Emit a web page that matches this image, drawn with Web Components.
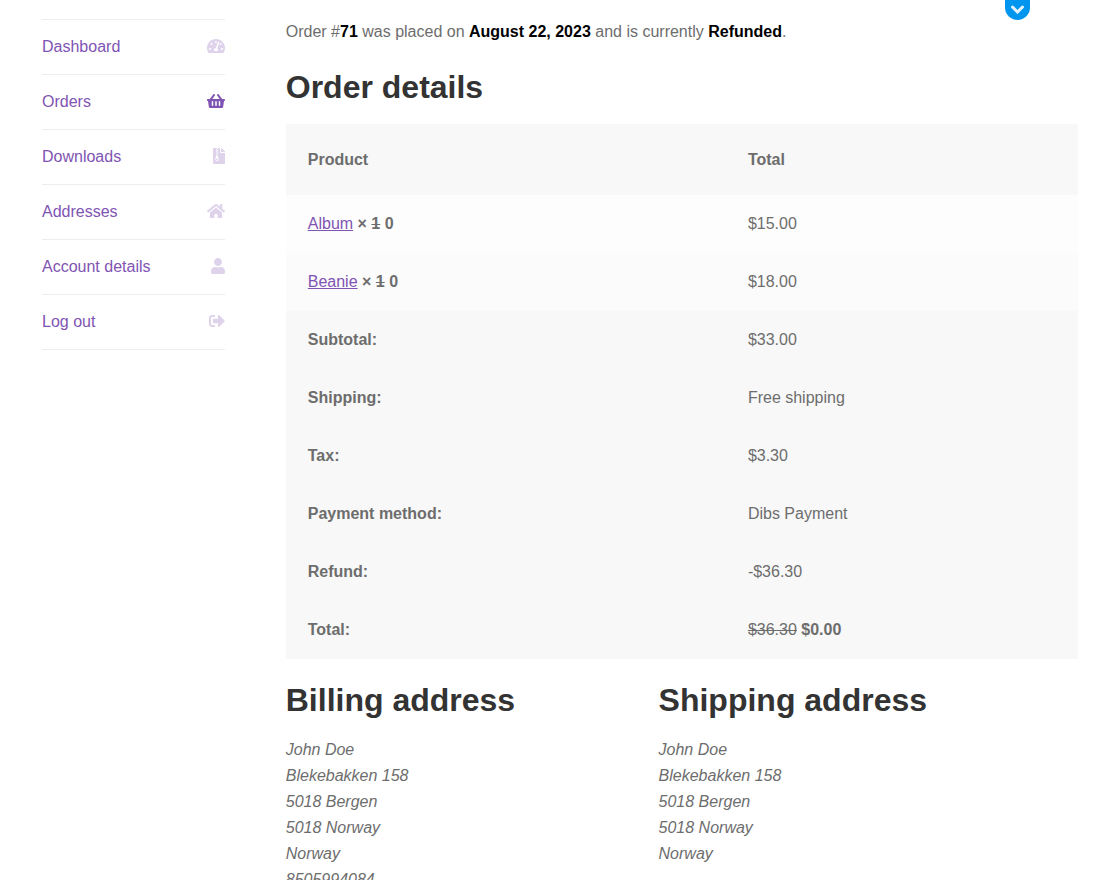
<!DOCTYPE html>
<html lang="en">
<head>
<meta charset="utf-8">
<title>Order #71</title>
<style>
  body {
    margin: 0;
    background: #fff;
    color: #6d6d6d;
    font: 16px/26px "Liberation Sans", Arial, sans-serif;
    --accent: #7f54b3;
    --heading: #333;
  }
</style>
</head>
<body>
<account-page>
  <account-nav slot="nav">
    <nav-item icon="dashboard" href="#dashboard">Dashboard</nav-item>
    <nav-item icon="basket" href="#orders" active>Orders</nav-item>
    <nav-item icon="archive" href="#downloads">Downloads</nav-item>
    <nav-item icon="home" href="#addresses">Addresses</nav-item>
    <nav-item icon="user" href="#account">Account details</nav-item>
    <nav-item icon="signout" href="#logout">Log out</nav-item>
  </account-nav>
  <order-status number="71" date="August 22, 2023" state="Refunded"></order-status>
  <section-heading>Order details</section-heading>
  <order-table></order-table>
  <address-columns>
    <address-card>
      <section-heading slot="title">Billing address</section-heading>
      John Doe<br>Blekebakken 158<br>5018 Bergen<br>5018 Norway<br>Norway<br>8505994084
    </address-card>
    <address-card>
      <section-heading slot="title">Shipping address</section-heading>
      John Doe<br>Blekebakken 158<br>5018 Bergen<br>5018 Norway<br>Norway
    </address-card>
  </address-columns>
</account-page>
<pull-tab></pull-tab>

<script>
const ICONS = {
  dashboard: [576, "M288 32C128.94 32 0 160.94 0 320c0 52.8 14.25 102.26 39.06 144.8 5.61 9.62 16.3 15.2 27.44 15.2h443c11.14 0 21.83-5.58 27.44-15.2C561.75 422.26 576 372.8 576 320c0-159.06-128.94-288-288-288zm0 64c14.71 0 26.58 10.13 30.32 23.65-1.11 2.26-2.64 4.23-3.45 6.67l-9.22 27.67c-5.13 3.49-10.97 6.01-17.64 6.01-17.67 0-32-14.33-32-32S270.33 96 288 96zM96 384c-17.67 0-32-14.33-32-32s14.33-32 32-32 32 14.33 32 32-14.33 32-32 32zm48-160c-17.67 0-32-14.33-32-32s14.33-32 32-32 32 14.33 32 32-14.33 32-32 32zm246.77-72.41l-61.33 184C343.13 347.33 352 364.54 352 384c0 11.72-3.38 22.55-8.88 32H232.88c-5.5-9.45-8.88-20.28-8.88-32 0-33.94 26.5-61.43 59.9-63.59l61.34-184.01c4.17-12.56 17.73-19.45 30.36-15.17 12.57 4.19 19.35 17.79 15.17 30.36zm14.66 57.2l15.52-46.55c3.47-1.29 7.13-2.23 11.05-2.23 17.67 0 32 14.33 32 32s-14.33 32-32 32c-11.38-.01-20.89-6.28-26.57-15.22zM480 384c-17.67 0-32-14.33-32-32s14.33-32 32-32 32 14.33 32 32-14.33 32-32 32z"],
  basket: [576, "M576 216v16c0 13.255-10.745 24-24 24h-8l-26.113 182.788C514.509 462.435 494.257 480 470.37 480H105.63c-23.887 0-44.139-17.565-47.518-41.212L32 256h-8c-13.255 0-24-10.745-24-24v-16c0-13.255 10.745-24 24-24h67.341l106.78-146.821c10.395-14.292 30.407-17.453 44.701-7.058 14.293 10.395 17.453 30.408 7.058 44.701L170.477 192h235.046L326.12 82.821c-10.395-14.292-7.234-34.306 7.059-44.701 14.291-10.395 34.306-7.235 44.701 7.058L484.659 192H552c13.255 0 24 10.745 24 24zM312 392V280c0-13.255-10.745-24-24-24s-24 10.745-24 24v112c0 13.255 10.745 24 24 24s24-10.745 24-24zm112 0V280c0-13.255-10.745-24-24-24s-24 10.745-24 24v112c0 13.255 10.745 24 24 24s24-10.745 24-24zm-224 0V280c0-13.255-10.745-24-24-24s-24 10.745-24 24v112c0 13.255 10.745 24 24 24s24-10.745 24-24z"],
  archive: [384, "M377 105L279.1 7c-4.5-4.5-10.6-7-17-7H256v128h128v-6.1c0-6.3-2.5-12.4-7-16.9zM128.4 336c-17.9 0-32.4 12.1-32.4 27 0 15 14.6 27 32.5 27s32.4-12.1 32.4-27-14.6-27-32.5-27zM224 136V0h-63.6v32h-32V0H24C10.7 0 0 10.7 0 24v464c0 13.3 10.7 24 24 24h336c13.3 0 24-10.7 24-24V160H248c-13.2 0-24-10.8-24-24zM95.9 32h32v32h-32zm32.3 384c-33.2 0-58-30.4-51.4-62.9L96.4 256v-32h32v-32h-32v-32h32v-32h-32V96h32V64h32v32h-32v32h32v32h-32v32h32v32h-32v32h22.1c5.7 0 10.7 4.1 11.8 9.7l17.3 87.7c6.4 32.4-18.4 62.6-51.4 62.6z"],
  home: [576, "M280.37 148.26L96 300.11V464a16 16 0 0 0 16 16l112.06-.29a16 16 0 0 0 15.92-16V368a16 16 0 0 1 16-16h64a16 16 0 0 1 16 16v95.64a16 16 0 0 0 16 16.05L464 480a16 16 0 0 0 16-16V300L295.67 148.26a12.19 12.19 0 0 0-15.3 0zM571.6 251.47L488 182.56V44.05a12 12 0 0 0-12-12h-56a12 12 0 0 0-12 12v72.61L318.47 43a48 48 0 0 0-61 0L4.34 251.47a12 12 0 0 0-1.6 16.9l25.5 31A12 12 0 0 0 45.15 301l235.22-193.74a12.19 12.19 0 0 1 15.3 0L530.9 301a12 12 0 0 0 16.9-1.6l25.5-31a12 12 0 0 0-1.7-16.93z"],
  user: [448, "M224 256c70.7 0 128-57.3 128-128S294.7 0 224 0 96 57.3 96 128s57.3 128 128 128zm89.6 32h-16.7c-22.2 10.2-46.9 16-72.9 16s-50.6-5.8-72.9-16h-16.7C60.2 288 0 348.2 0 422.4V464c0 26.5 21.5 48 48 48h352c26.5 0 48-21.5 48-48v-41.6c0-74.2-60.2-134.4-134.4-134.4z"],
  signout: [512, "M497 273L329 441c-15 15-41 4.5-41-17v-96H152c-13.3 0-24-10.7-24-24v-96c0-13.3 10.7-24 24-24h136V88c0-21.4 25.9-32 41-17l168 168c9.3 9.4 9.3 24.6 0 34zM192 436v-40c0-6.6-5.4-12-12-12H96c-17.7 0-32-14.3-32-32V160c0-17.7 14.3-32 32-32h84c6.6 0 12-5.4 12-12V76c0-6.6-5.4-12-12-12H96c-53 0-96 43-96 96v192c0 53 43 96 96 96h84c6.6 0 12-5.4 12-12z"]
};

// Registers an element whose shadow root is filled from render(host).
function define(name, render) {
  customElements.define(name, class extends HTMLElement {
    connectedCallback() {
      if (!this.shadowRoot) this.attachShadow({ mode: "open" }).innerHTML = render(this);
    }
  });
}

define("account-page", () => `
  <style>
    :host { display: grid; grid-template-columns: minmax(0, 3fr) minmax(0, 1fr) minmax(0, 13fr);
            padding: 19px 42px 42px; align-items: start; }
    main { grid-column: 3; }
  </style>
  <slot name="nav"></slot>
  <main><slot></slot></main>`);

define("account-nav", () => `
  <style>
    :host { display: block; }
    nav { border-top: 1px solid #eee; }
  </style>
  <nav aria-label="Account"><slot></slot></nav>`);

define("nav-item", el => {
  const [w, d] = ICONS[el.getAttribute("icon")];
  return `
  <style>
    :host { display: block; border-bottom: 1px solid #eee; }
    a { display: flex; justify-content: space-between; align-items: center;
        padding: 14px 0; color: var(--accent); text-decoration: none; }
    svg { margin-bottom: 2px; fill: currentColor; opacity: .25; }
    :host([active]) svg { opacity: 1; }
  </style>
  <a href="${el.getAttribute("href")}"><slot></slot><svg viewBox="0 0 ${w} 512" width="${w / 32}" height="16" aria-hidden="true"><path d="${d}"/></svg></a>`;
});

define("order-status", el => `
  <style>
    :host { display: block; margin-bottom: 22px; }
    p { margin: 0; }
    mark { background: none; color: #000; font-weight: bold; }
  </style>
  <p>Order #<mark>${el.getAttribute("number")}</mark> was placed on <mark>${el.getAttribute("date")}</mark> and is currently <mark>${el.getAttribute("state")}</mark>.</p>`);

define("section-heading", () => `
  <style>
    :host { display: block; margin-bottom: 17px; }
    h2 { margin: 0; font-size: 32px; line-height: 40px; color: var(--heading); }
  </style>
  <h2><slot></slot></h2>`);

define("order-table", () => {
  const items = [["Album", "$15.00"], ["Beanie", "$18.00"]];
  const totals = [
    ["Subtotal:", "$33.00"], ["Shipping:", "Free shipping"], ["Tax:", "$3.30"],
    ["Payment method:", "Dibs Payment"], ["Refund:", "-$36.30"],
    ["Total:", "<del>$36.30</del> <strong>$0.00</strong>"]
  ];
  return `
  <style>
    :host { display: block; margin-bottom: 21px; }
    table { width: 100%; border-collapse: collapse; table-layout: fixed; }
    th, td { padding: 16px 22px; text-align: left; background: #f8f8f8; }
    thead th { padding: 23px 22px 22px; }
    thead th:first-child { width: 50%; }
    tbody td { background: #fdfdfd; }
    tbody tr:nth-child(2n) td { background: #fbfbfb; }
    a { color: var(--accent); }
  </style>
  <table>
    <thead><tr><th scope="col">Product</th><th scope="col">Total</th></tr></thead>
    <tbody>${items.map(([n, p]) => `<tr><td><a href="#${n.toLowerCase()}">${n}</a> <strong>× <del>1</del> 0</strong></td><td>${p}</td></tr>`).join("")}</tbody>
    <tfoot>${totals.map(([n, v]) => `<tr><th scope="row">${n}</th><td>${v}</td></tr>`).join("")}</tfoot>
  </table>`;
});

define("address-columns", () => `
  <style>
    :host { display: grid; grid-template-columns: 8fr 9fr; }
  </style>
  <slot></slot>`);

define("address-card", () => `
  <style>
    :host { display: block; }
    address { font-style: italic; }
  </style>
  <slot name="title"></slot>
  <address><slot></slot></address>`);

define("pull-tab", () => `
  <style>
    :host { position: absolute; top: 0; right: 90px; }
    button { display: flex; justify-content: center; width: 25px; height: 20px; padding: 4px 0 0;
             border: 0; border-radius: 0 0 13px 13px; background: #0096f0; }
    svg { width: 15px; height: 10px; }
  </style>
  <button type="button" aria-label="Show toolbar"><svg viewBox="0 0 15 10" aria-hidden="true"><path d="M2.5 3 7.5 8 12.5 3" fill="none" stroke="#e3f2fd" stroke-width="3" stroke-linecap="round"/></svg></button>`);
</script>
</body>
</html>
